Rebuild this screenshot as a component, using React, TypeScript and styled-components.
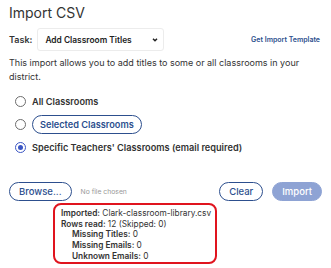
import styled, { createGlobalStyle } from "styled-components";

const GlobalStyle = createGlobalStyle`
  body {
    margin: 0;
    background: #fff;
    font-family: Inter, "Noto Sans", sans-serif;
    color: #333;
  }
`;

const Panel = styled.div`
  width: 331px;
  height: 268px;
  box-sizing: border-box;
  padding: 4px 9px 0 9px;
  display: flex;
  flex-direction: column;
`;

const Title = styled.h1`
  margin: 0;
  font-size: 14px;
  font-weight: 400;
  line-height: 18px;
  color: #333;
`;

const TaskRow = styled.div`
  margin-top: 6px;
  display: flex;
  align-items: center;
  height: 23px;
`;

const Label = styled.span`
  font-size: 9px;
  font-weight: 600;
  color: #333;
  margin-right: 5px;
`;

const Select = styled.div`
  width: 127px;
  height: 23px;
  box-sizing: border-box;
  border: 1px solid #ececec;
  border-radius: 3px;
  display: flex;
  align-items: center;
  justify-content: space-between;
  padding: 0 4px 0 7px;
  font-size: 8.4px;
  font-weight: 600;
  color: #222;
`;

const TemplateLink = styled.a`
  margin-left: auto;
  margin-right: 2px;
  font-size: 7px;
  font-weight: 600;
  color: #2d4f8e;
  text-decoration: none;
`;

const Intro = styled.p`
  margin: 5px 0 0 0;
  font-size: 9px;
  line-height: 14px;
  color: #333;
`;

const Options = styled.div`
  margin-top: 8px;
  display: flex;
  flex-direction: column;
  gap: 4px;
`;

const Option = styled.label`
  display: flex;
  align-items: center;
  height: 19px;
  padding-left: 6px;
  gap: 6px;
  font-size: 9.2px;
  font-weight: 600;
  color: #333;
`;

const Radio = styled.span<{ $checked?: boolean }>`
  width: 11px;
  height: 11px;
  box-sizing: border-box;
  border-radius: 50%;
  border: 1.5px solid ${(p) => (p.$checked ? "#3b56c4" : "#6d6d6d")};
  display: flex;
  align-items: center;
  justify-content: center;
  &::after {
    content: "";
    display: ${(p) => (p.$checked ? "block" : "none")};
    width: 5px;
    height: 5px;
    border-radius: 50%;
    background: #3b56c4;
  }
`;

const Pill = styled.span`
  height: 19px;
  box-sizing: border-box;
  border: 1px solid #2d4f8e;
  border-radius: 10px;
  padding: 0 7px;
  display: flex;
  align-items: center;
  color: #2d4f8e;
`;

const FileRow = styled.div`
  margin-top: 25px;
  display: flex;
  align-items: center;
  gap: 9px;
`;

const Button = styled.button<{ $filled?: boolean }>`
  height: 19px;
  box-sizing: border-box;
  border-radius: 10px;
  padding: 0 9px;
  font-family: inherit;
  font-size: 9.5px;
  font-weight: 500;
  border: 1px solid ${(p) => (p.$filled ? "#8ea3d4" : "#2d4f8e")};
  background: ${(p) => (p.$filled ? "#8ea3d4" : "#fff")};
  color: ${(p) => (p.$filled ? "#fff" : "#2d4f8e")};
`;

const FileNote = styled.span`
  font-size: 6.8px;
  color: #999;
`;

const Spacer = styled.div`
  flex: 1;
`;

const Summary = styled.div`
  margin: 2px 0 0 44px;
  width: 164px;
  height: 61px;
  box-sizing: border-box;
  border: 2px solid #e0141e;
  border-radius: 8px;
  padding: 3px 0 0 6px;
  font-size: 8.3px;
  line-height: 10.7px;
  color: #333;
`;

const Line = styled.div<{ $indent?: boolean }>`
  padding-left: ${(p) => (p.$indent ? "11px" : "0")};
  white-space: nowrap;
  b {
    font-weight: 600;
  }
`;

const Chevron = () => (
  <svg width="8" height="6" viewBox="0 0 8 6">
    <path d="M2 1.8 L4 3.8 L6 1.8" fill="none" stroke="#222" strokeWidth="1.5" />
  </svg>
);

const App = () => {
  return (
    <>
      <GlobalStyle />
      <Panel>
        <Title>Import CSV</Title>
        <TaskRow>
          <Label>Task:</Label>
          <Select>
            <span>Add Classroom Titles</span>
            <Chevron />
          </Select>
          <TemplateLink href="#">Get Import Template</TemplateLink>
        </TaskRow>
        <Intro>
          This import allows you to add titles to some or all classrooms in your district.
        </Intro>
        <Options>
          <Option>
            <Radio />
            All Classrooms
          </Option>
          <Option>
            <Radio />
            <Pill>Selected Classrooms</Pill>
          </Option>
          <Option>
            <Radio $checked />
            Specific Teachers' Classrooms (email required)
          </Option>
        </Options>
        <FileRow>
          <Button>Browse...</Button>
          <FileNote>No file chosen</FileNote>
          <Spacer />
          <Button>Clear</Button>
          <Button $filled>Import</Button>
        </FileRow>
        <Summary>
          <Line>
            <b>Imported:</b> Clark-classroom-library.csv
          </Line>
          <Line>
            <b>Rows read:</b> 12 (Skipped: 0)
          </Line>
          <Line $indent>
            <b>Missing Titles:</b> 0
          </Line>
          <Line $indent>
            <b>Missing Emails:</b> 0
          </Line>
          <Line $indent>
            <b>Unknown Emails:</b> 0
          </Line>
        </Summary>
      </Panel>
    </>
  );
};

export default App;
